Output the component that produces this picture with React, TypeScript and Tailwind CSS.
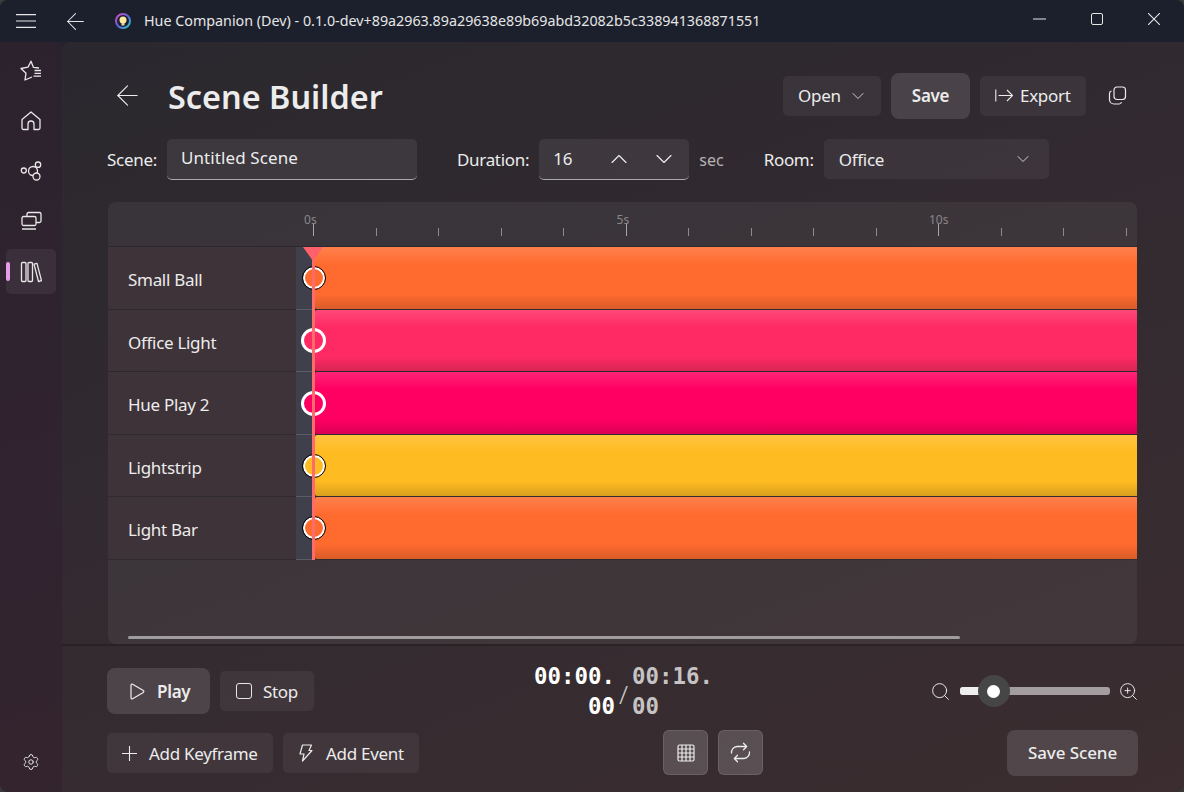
import { ArrowLeft, ChevronDown, ChevronUp, Search, Settings, ZoomIn } from 'lucide-react';

const FONT = "font-['Noto_Sans','Open_Sans',sans-serif]";

const tracks = [
  { name: 'Small Ball', color: '#ff6b2f', ring: true },
  { name: 'Office Light', color: '#ff2a63', ring: false },
  { name: 'Hue Play 2', color: '#ff0062', ring: false },
  { name: 'Lightstrip', color: '#ffbb22', ring: true },
  { name: 'Light Bar', color: '#ff6b2f', ring: true },
];

const seconds = Array.from({ length: 14 }, (_, i) => i);

const HamburgerIcon = () => (
  <svg width="20" height="14" viewBox="0 0 20 14" fill="none" stroke="currentColor" strokeWidth="1.1">
    <path d="M0 .6h20M0 7h20M0 13.400h20" />
  </svg>
);

const StarList = () => (
  <svg width="22" height="22" viewBox="0 0 22 22" fill="none" stroke="currentColor" strokeWidth="1.3" strokeLinejoin="round">
    <path d="M19 8l-5.500-.6L11 1.200 8 7.200l-7 1.300 5 4.700-1 6.800 7-3" />
    <path d="M14.500 10.500H21M14.500 13.300H21M13.500 16.100H21" />
  </svg>
);

const HomeIcon = () => (
  <svg width="22" height="22" viewBox="0 0 22 22" fill="none" stroke="currentColor" strokeWidth="1.3" strokeLinejoin="round">
    <path d="M2 9.500L11 2l9 7.500V18a1.500 1.500 0 0 1-1.500 1.500H14V14a3 3 0 0 0-6 0v5.500H3.500A1.500 1.500 0 0 1 2 18z" />
  </svg>
);

const HubIcon = () => (
  <svg width="22" height="22" viewBox="0 0 22 22" fill="none" stroke="currentColor" strokeWidth="1.3">
    <circle cx="3.800" cy="10.500" r="2.500" />
    <circle cx="13" cy="11" r="4.500" />
    <circle cx="18" cy="4.700" r="2.700" fill="#33252f" />
    <circle cx="16.500" cy="16.500" r="3.500" fill="#33252f" />
  </svg>
);

const DevicesIcon = () => (
  <svg width="22" height="22" viewBox="0 0 22 22" fill="none" stroke="currentColor" strokeWidth="1.3">
    <rect x="7" y="2.500" width="14" height="10" rx="1.500" />
    <rect x="2" y="6.500" width="14" height="9" rx="1.500" fill="#33252f" />
    <path d="M2 19h14" />
  </svg>
);

const LibraryIcon = () => (
  <svg width="22" height="22" viewBox="0 0 22 22" fill="none" stroke="currentColor" strokeWidth="1.3">
    <rect x="1.500" y="1.500" width="4.500" height="19" rx="1" />
    <rect x="8" y="1.500" width="4.500" height="19" rx="1" />
    <path d="M14 3.200l3-.9 4.500 17.400-3 .8z" strokeLinejoin="round" />
  </svg>
);

const ExportIcon = () => (
  <svg width="18" height="16" viewBox="0 0 18 16" fill="none" stroke="currentColor" strokeWidth="1.1">
    <path d="M.8 1.500v12M3.500 7.500h14M12 2l5.500 5.500L12 13" />
  </svg>
);

const CopyIcon = () => (
  <svg width="19" height="19" viewBox="0 0 19 19" fill="none" stroke="currentColor" strokeWidth="1.2">
    <rect x="6" y="1" width="11.500" height="12.500" rx="3" />
    <path d="M3.500 5A2.500 2.500 0 0 0 1.500 7.500v6A4.500 4.500 0 0 0 6 18h5a2.500 2.500 0 0 0 2.500-2" />
  </svg>
);

const BoltIcon = () => (
  <svg width="14" height="18" viewBox="0 0 14 18" fill="none" stroke="currentColor" strokeWidth="1.2" strokeLinejoin="round">
    <path d="M3.500 1h9L10 6.500h3L3.500 17 5 10H1z" />
  </svg>
);

const PlayIcon = () => (
  <svg width="15" height="17" viewBox="0 0 15 17" fill="none" stroke="currentColor" strokeWidth="1.2" strokeLinejoin="round">
    <path d="M1 2.200c0-.9.900-1.400 1.600-1l10.700 6.300c.7.400.7 1.500 0 1.900L2.600 15.800c-.7.400-1.600-.1-1.600-1z" />
  </svg>
);

const PlusIcon = () => (
  <svg width="15" height="15" viewBox="0 0 15 15" fill="none" stroke="currentColor" strokeWidth="1.1">
    <path d="M7.500 0v15M0 7.500h15" />
  </svg>
);

const GridIcon = () => (
  <svg width="18" height="18" viewBox="0 0 18 18" fill="none" stroke="currentColor" strokeWidth="1.2">
    <rect x="1" y="1" width="16" height="16" rx="1.500" />
    <path d="M5 1v16M9 1v16M13 1v16M1 5h16M1 9h16M1 13h16" />
  </svg>
);

const LoopIcon = () => (
  <svg width="21" height="21" viewBox="0 0 21 21" fill="none" stroke="currentColor" strokeWidth="1.3" strokeLinecap="round" strokeLinejoin="round">
    <path d="M1.500 11A6 6 0 0 1 7 4.500h9.500M13.500 1.300l3.200 3.200-3.200 3.200" />
    <path d="M19.500 10A6 6 0 0 1 14 16.500H4.500M7.500 13.300L4.300 16.500l3.200 3.200" />
  </svg>
);

const HueLogo = () => (
  <svg width="16" height="16" viewBox="0 0 16 16">
    <defs>
      <linearGradient id="rim" x1="0" y1="0" x2="1" y2="1">
        <stop offset="0" stopColor="#e04ac0" />
        <stop offset="0.5" stopColor="#5a62e0" />
        <stop offset="1" stopColor="#2fd0c0" />
      </linearGradient>
    </defs>
    <circle cx="8" cy="8" r="7" fill="none" stroke="url(#rim)" strokeWidth="2" />
    <circle cx="8" cy="7" r="3.500" fill="#fde9a0" />
    <rect x="6.500" y="10" width="3" height="2.500" fill="#e8d9b0" />
  </svg>
);

const Btn = ({ className, children }: { className: string; children: React.ReactNode }) => (
  <div className={`flex items-center rounded-[5px] bg-white/[0.055] text-[17px] tracking-[-0.3px] text-[#ececec] ${className}`}>{children}</div>
);

const App = () => (
  <div className="bg-[#3a3a3a]">
    <div className={`${FONT} relative flex h-[792px] w-[1184px] flex-col overflow-hidden rounded-[8px] bg-[linear-gradient(165deg,#1f222e_0%,#2c2430_40%,#3a2a2e_100%)] text-[#ececec]`}>
      {/* Title bar */}
      <header className="flex h-[42px] shrink-0 items-center bg-[#1c202d] pl-[16px] text-[#e6e6e6]">
        <HamburgerIcon />
        <ArrowLeft size={27} strokeWidth={0.9} className="ml-[26px]" />
        <div className="ml-[26px]"><HueLogo /></div>
        <span className="ml-[13px] text-[14.300px]">Hue Companion (Dev) - 0.1.0-dev+89a2963.89a29638e89b69abd32082b5c338941368871551</span>
        <div className="ml-auto flex items-center gap-[45px] pb-[4px] pr-[24px]">
          <svg width="13" height="12" viewBox="0 0 13 12" stroke="currentColor" strokeWidth="1.1"><path d="M0 6h13" /></svg>
          <div className="h-[12px] w-[12px] rounded-[2px] border border-[#e6e6e6]" />
          <svg width="12" height="12" viewBox="0 0 12 12" stroke="currentColor" strokeWidth="1.1"><path d="M0 0l12 12M12 0L0 12" /></svg>
        </div>
      </header>

      <div className="flex min-h-0 flex-1">
        {/* Nav rail */}
        <nav className="flex w-[62px] shrink-0 flex-col items-center bg-[#33232e]/60 pb-[21px] pt-[4px] text-[#e8e8e8]">
          <div className="flex h-[50px] items-center justify-center"><StarList /></div>
          <div className="flex h-[50px] items-center justify-center"><HomeIcon /></div>
          <div className="flex h-[50px] items-center justify-center"><HubIcon /></div>
          <div className="flex h-[50px] items-center justify-center"><DevicesIcon /></div>
          <div className="relative mt-[3px] flex h-[45px] w-[50px] items-center justify-center rounded-[5px] bg-white/[0.06]">
            <div className="absolute left-0 top-[13px] h-[19px] w-[3.500px] rounded-full bg-[#e79ae6]" />
            <LibraryIcon />
          </div>
          <Settings size={18} strokeWidth={1.3} className="mt-auto" />
        </nav>

        {/* Page */}
        <main className="flex min-w-0 flex-1 flex-col rounded-tl-[8px] bg-[linear-gradient(160deg,#2a282e_0%,#312a30_40%,#3b2d30_100%)]">
          <div className="flex flex-1 flex-col pl-[45px] pr-[47px]">
            {/* Heading */}
            <div className="flex h-[97px] shrink-0 items-center pl-[4px] pt-[10px]">
              <ArrowLeft size={33} strokeWidth={0.8} />
              <h1 className="ml-[24px] mt-[2px] text-[32.400px] font-semibold leading-none">Scene Builder</h1>
              <div className="ml-auto flex items-center">
                <Btn className="h-[40px] w-[98px] justify-between pl-[15px] pr-[13px]">Open <ChevronDown size={20} strokeWidth={1} /></Btn>
                <div className="ml-[10px] flex h-[46px] w-[79px] items-center justify-center rounded-[8px] bg-white/[0.12] text-[17px] font-semibold tracking-[-0.3px]">Save</div>
                <Btn className="ml-[10px] h-[40px] w-[106px] gap-[7px] pl-[15px]"><ExportIcon /> Export</Btn>
                <div className="ml-[22px] mr-[10px]"><CopyIcon /></div>
              </div>
            </div>

            {/* Form row */}
            <div className="flex h-[41px] shrink-0 items-center text-[17px] tracking-[-0.3px]">
              <span className="pt-[1px]">Scene:</span>
              <div className="ml-[10px] flex h-[41px] w-[250px] items-center rounded-[5px] border-b border-[#aaa] bg-white/[0.07] pb-[3px] pl-[14px] tracking-[0.1px]">Untitled Scene</div>
              <span className="ml-[40px] pt-[1px]">Duration:</span>
              <div className="ml-[10px] flex h-[41px] w-[150px] items-center rounded-[5px] border-b border-[#aaa] bg-white/[0.07] pl-[14px]">
                16
                <div className="ml-auto flex gap-[17px] pr-[11px]">
                  <ChevronUp size={28} strokeWidth={1} />
                  <ChevronDown size={28} strokeWidth={1} />
                </div>
              </div>
              <span className="ml-[10px] pt-[1px] text-[16px] tracking-normal text-[#b5b2b4]">sec</span>
              <span className="ml-[40px] pt-[1px]">Room:</span>
              <Btn className="mb-[1px] ml-[10px] h-[40px] w-[225px] justify-between pl-[15px] pr-[16px]"><span className="pt-[1px]">Office</span> <ChevronDown size={20} strokeWidth={1} /></Btn>
            </div>

            {/* Timeline */}
            <section className="relative ml-[1px] mt-[22px] flex h-[442px] flex-col overflow-hidden rounded-[8px] bg-white/[0.05]">
              <div className="relative flex h-[45px] shrink-0 border-b border-black/20 pl-[205px]">
                {seconds.map((s) => (
                  <div key={s} className="relative h-full w-[62.500px] shrink-0">
                    {s % 5 === 0 && <span className="absolute left-[-9px] top-[9px] text-[12px] tracking-normal text-[#8a8688]">{s}s</span>}
                    <div className={s % 5 === 0 ? 'absolute bottom-[10px] left-0 h-[12px] w-px bg-[#a8a5a7]' : 'absolute bottom-[10px] left-0 h-[8px] w-px bg-[#8d898c]'} />
                  </div>
                ))}
              </div>
              <div className="relative flex flex-col">
                {tracks.map((t) => (
                  <div key={t.name} className="flex h-[62.500px] border-b border-black/20">
                    <div className="flex w-[188px] shrink-0 items-center bg-[#3e3338] pl-[20px] pt-[4px] text-[17px] tracking-[-0.3px]">{t.name}</div>
                    <div className="-mb-px w-[17px] shrink-0 border-b border-white/15 bg-[#40404c]" />
                    <div
                      className="ml-[2px] flex-1 rounded-l-[2px]"
                      style={{ backgroundColor: t.color, backgroundImage: 'linear-gradient(180deg, rgba(255,255,255,0.14) 0%, rgba(255,255,255,0) 28%, rgba(0,0,0,0) 76%, rgba(0,0,0,0.15) 100%)' }}
                    />
                  </div>
                ))}
                {tracks.map((t, i) => (
                  <div
                    key={t.name}
                    className={t.ring ? 'absolute left-[194.500px] h-[22px] w-[22px] rounded-full border-[2.500px] border-white outline-1 outline-black' : 'absolute left-[193px] h-[25px] w-[25px] rounded-full border-[3.500px] border-white'}
                    style={{ top: (t.ring ? 20 : 18.5) + i * 62.5, backgroundColor: t.color }}
                  />
                ))}
                {/* Playhead */}
                <div className="absolute bottom-0 left-[204px] top-0 w-[3px] bg-[#ff6a6a]" />
                <div className="absolute left-[195px] top-0 h-0 w-0 border-x-[10px] border-t-[14px] border-x-transparent border-t-[#ff6069]" />
              </div>
              <div className="absolute bottom-[5px] left-[20px] h-[3px] w-[832px] rounded-full bg-[#a09c9e]" />
            </section>
          </div>

          {/* Transport */}
          <footer className="flex h-[148px] shrink-0 flex-col border-t-2 border-black/20 pl-[45px] pr-[47px] pt-[22px]">
            <div className="flex h-[46px] items-center">
              <div className="flex h-[46px] w-[103px] items-center gap-[12px] rounded-[8px] bg-white/[0.12] pl-[23px] text-[17px] font-semibold tracking-[-0.3px]">
                <PlayIcon /><span className="pt-[2px]">Play</span>
              </div>
              <Btn className="ml-[10px] h-[40px] w-[94px] gap-[11px] pl-[16px]"><div className="h-[16px] w-[16px] rounded-[3px] border-[1.500px] border-[#e6e6e6]" /><span className="pt-[2px]">Stop</span></Btn>
              <div className="ml-[220px] flex items-center font-['DejaVu_Sans_Mono',monospace] text-[22.400px] font-bold leading-[30px]">
                <div className="w-[81px] text-right text-white">00:00.<br />00</div>
                <span className="w-[17px] translate-y-[3px] text-center font-['Noto_Sans',sans-serif] text-[26px] font-light text-[#c8c8c8]">/</span>
                <div className="w-[82px] text-left text-[#c6c3c4]">00:16.<br />00</div>
              </div>
              <div className="-mr-[2px] ml-auto flex items-center">
                <Search size={21} strokeWidth={1.1} />
                <div className="relative mx-[8.500px] h-[8px] w-[150px] rounded-[3px] bg-[#a39d9f]">
                  <div className="h-full w-[30px] rounded-l-[3px] bg-[#eeeeee]" />
                  <div className="absolute left-[18px] top-[-12px] flex h-[32px] w-[32px] items-center justify-center rounded-full bg-[#464646]">
                    <div className="h-[13px] w-[13px] rounded-full bg-white" />
                  </div>
                </div>
                <ZoomIn size={21} strokeWidth={1.1} />
              </div>
            </div>
            <div className="mt-[16px] flex items-start">
              <Btn className="mt-[3px] h-[40px] w-[166px] gap-[12px] pl-[15px]"><PlusIcon /><span className="pt-[2px]">Add Keyframe</span></Btn>
              <Btn className="ml-[10px] mt-[3px] h-[40px] w-[136px] gap-[13px] pl-[16px]"><BoltIcon /><span className="pt-[2px]">Add Event</span></Btn>
              <div className="ml-[244px] flex h-[45px] w-[45px] items-center justify-center rounded-[6px] border border-white/10 bg-white/[0.17]"><GridIcon /></div>
              <div className="ml-[10px] flex h-[45px] w-[45px] items-center justify-center rounded-[6px] border border-white/10 bg-white/[0.17]"><LoopIcon /></div>
              <div className="-mr-[1px] ml-auto flex h-[46px] w-[131px] items-center justify-center rounded-[8px] bg-white/[0.12] text-[17px] font-medium tracking-[-0.1px]">Save Scene</div>
            </div>
          </footer>
        </main>
      </div>
    </div>
  </div>
);

export default App;
